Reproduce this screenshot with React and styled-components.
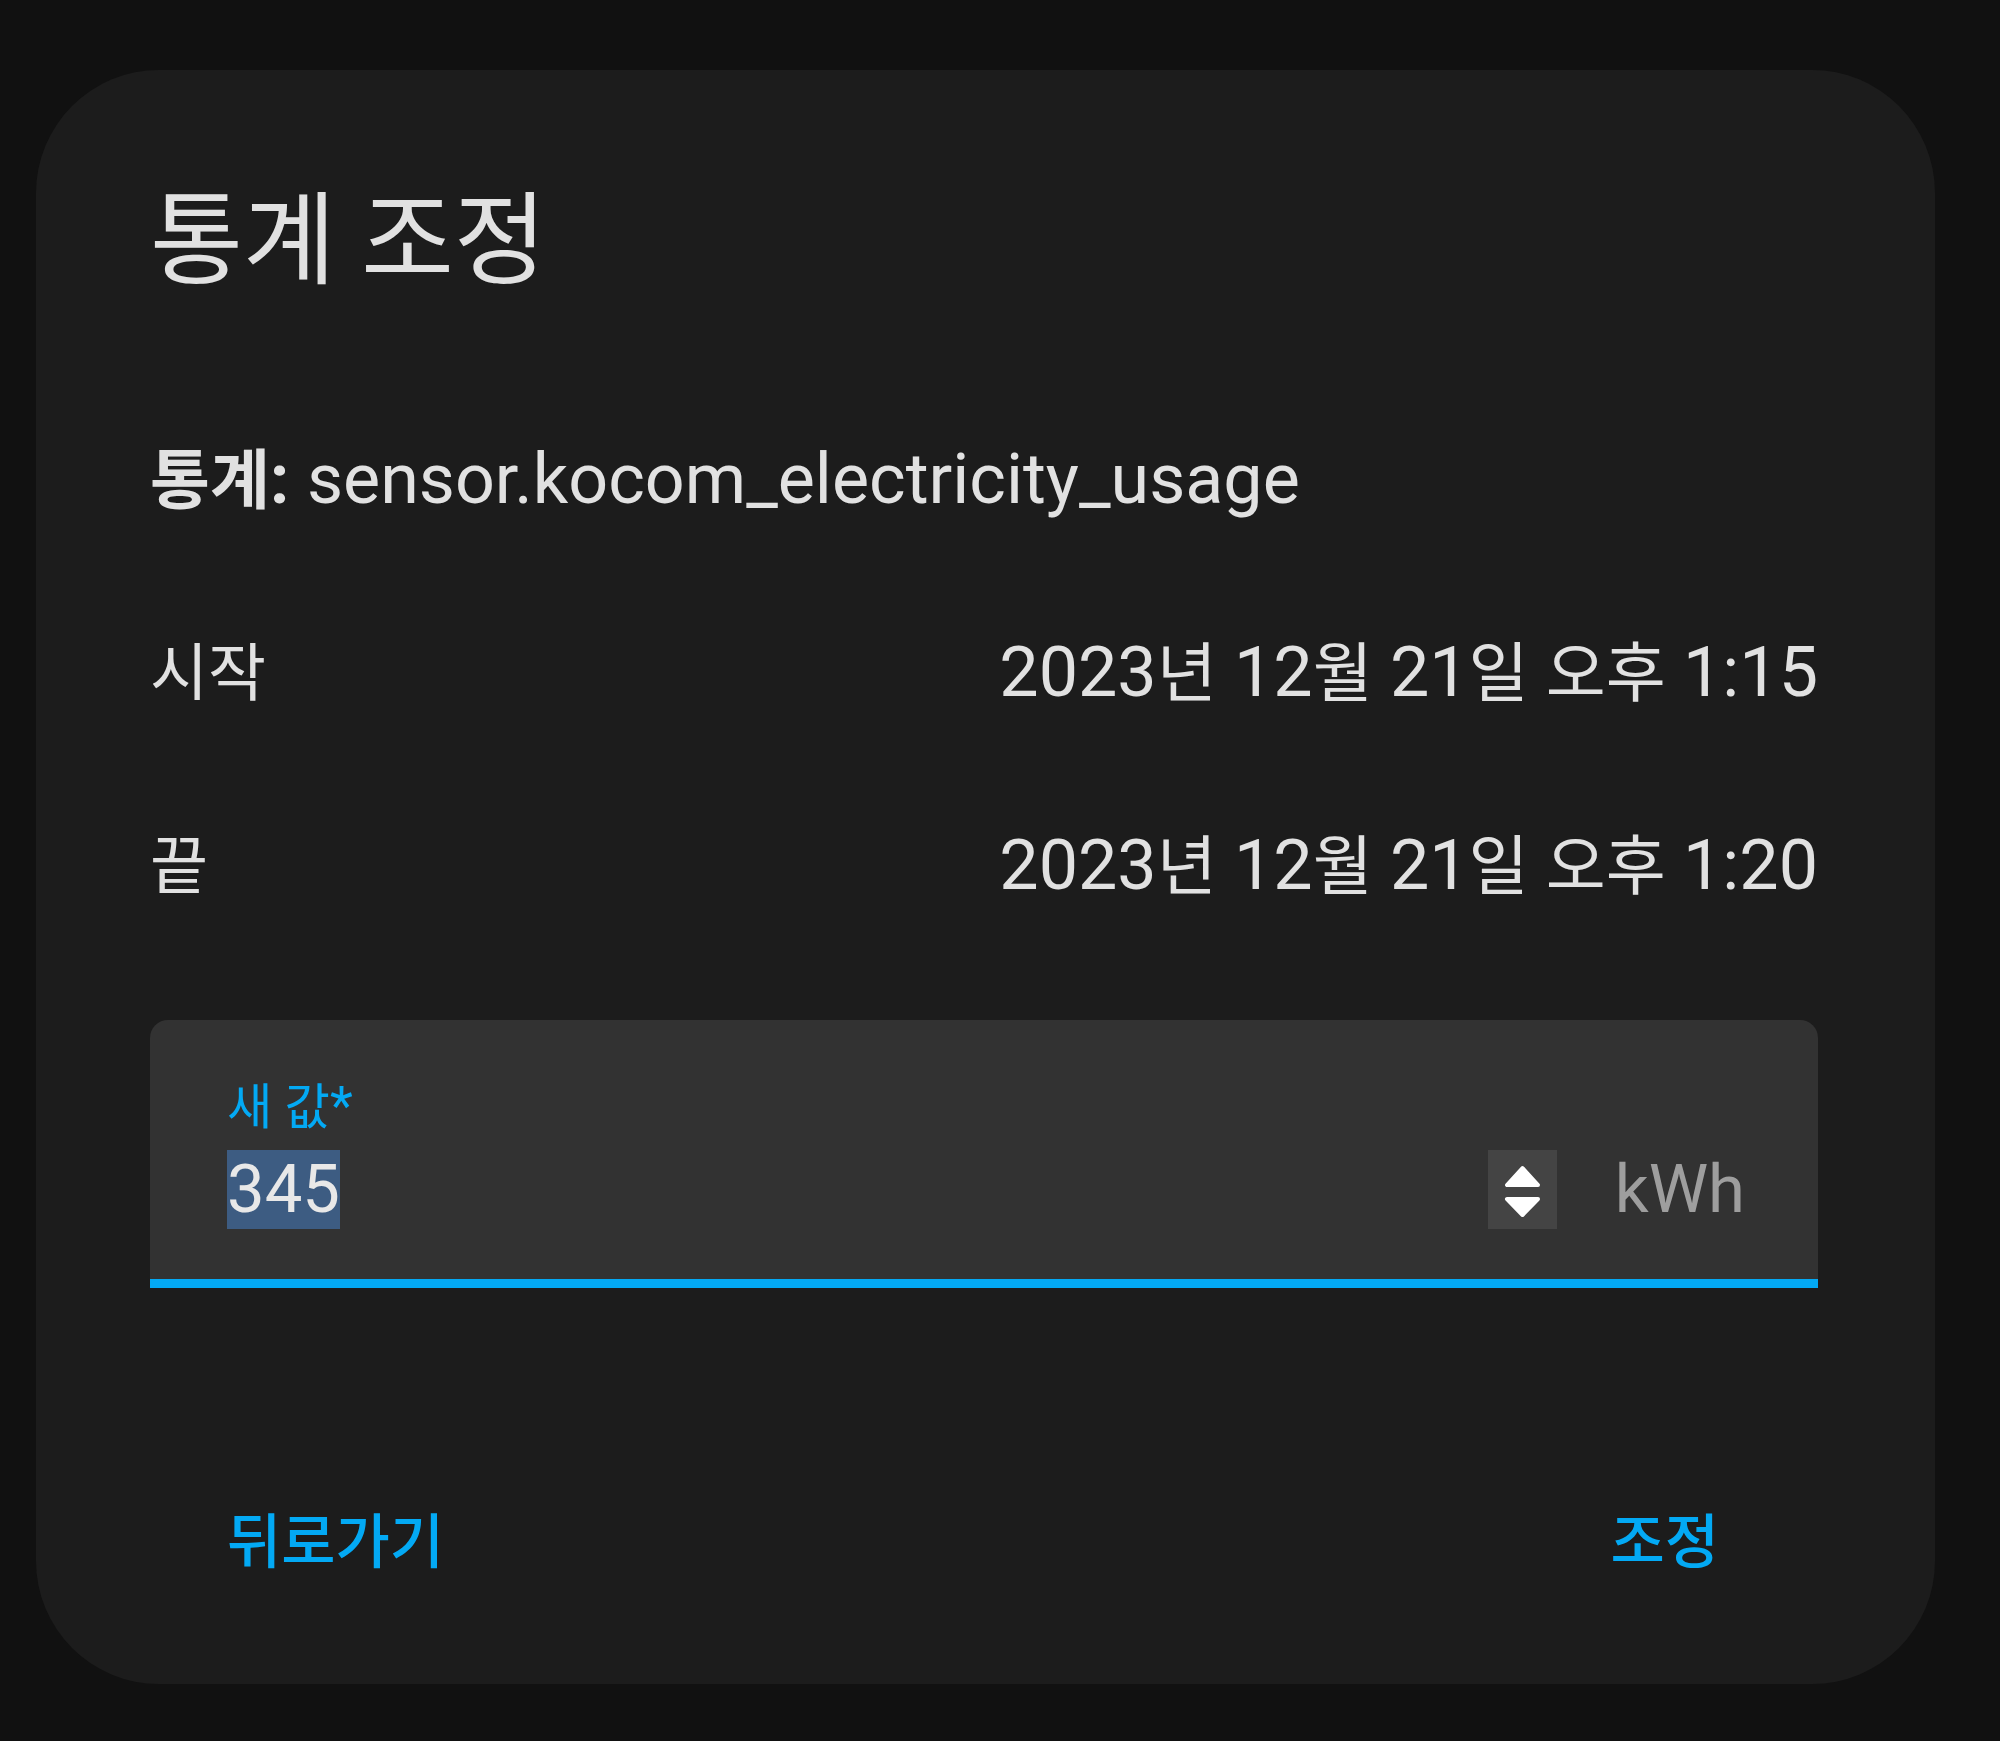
import React from "react";
import styled, { createGlobalStyle } from "styled-components";

const GlobalStyle = createGlobalStyle`
  html, body {
    margin: 0;
    padding: 0;
    background: #111111;
  }
  body {
    font-family: Roboto, "Noto Sans CJK KR", sans-serif;
    color: #e1e1e1;
  }
`;

const Page = styled.div`
  box-sizing: border-box;
  width: 2000px;
  height: 1741px;
  padding: 70px 65px 57px 36px;
  background: #111111;
`;

const Dialog = styled.div`
  box-sizing: border-box;
  width: 1899px;
  height: 1614px;
  background: #1c1c1c;
  border-radius: 123px;
  padding: 108px 117px 67px 114px;
  display: flex;
  flex-direction: column;
`;

const Title = styled.h2`
  margin: 0;
  font-size: 101px;
  line-height: 128px;
  font-weight: 400;
  color: #e1e1e1;
`;

// hangul in the shot is drawn a bit smaller than the latin text
const Ko = styled.span`
  font-size: ${(p) => p.$scale || 0.93}em;
`;

const InfoList = styled.div`
  margin-top: 72px;
  display: flex;
  flex-direction: column;
`;

const InfoRow = styled.div`
  height: 193px;
  display: flex;
  align-items: center;
  justify-content: space-between;
  font-size: 70px;
  color: #e1e1e1;

  b {
    font-weight: 700;
  }
`;

const Field = styled.div`
  box-sizing: border-box;
  margin-top: 63px;
  height: 268px;
  background: #323232;
  border-radius: 18px 18px 0 0;
  border-bottom: 9px solid #03a9f4;
  padding: 56px 73px 0 77px;
`;

const FieldLabel = styled.div`
  font-size: 53px;
  line-height: 60px;
  color: #03a9f4;
`;

const InputRow = styled.div`
  margin-top: 13px;
  height: 79px;
  display: flex;
  align-items: center;
`;

const ValueBox = styled.div`
  flex: 1;
  display: flex;
`;

const Selected = styled.span`
  background: #3d5c82;
  font-size: 67px;
  line-height: 79px;
  color: #e8e8e8;
`;

const Spinner = styled.div`
  width: 69px;
  height: 79px;
  background: #444444;
  margin-right: 58px;
  display: flex;

  svg {
    display: block;
  }
`;

const Suffix = styled.span`
  font-size: 67px;
  line-height: 79px;
  color: #9e9e9e;
`;

const Actions = styled.div`
  margin-top: auto;
  height: 160px;
  display: flex;
  align-items: center;
  justify-content: space-between;
  padding: 0 59px 0 37px;
`;

const TextButton = styled.button`
  height: 160px;
  padding: 0 40px;
  border: none;
  background: none;
  font-family: Roboto, "Noto Sans CJK KR", sans-serif;
  font-size: 59px;
  font-weight: 500;
  color: #03a9f4;
  cursor: pointer;
`;

const SpinIcon = () => (
  <svg width="69" height="79" viewBox="0 0 69 79">
    <polygon
      points="19,35 50,35 34.5,18"
      fill="#fff"
      stroke="#fff"
      strokeWidth="4"
      strokeLinejoin="round"
    />
    <polygon
      points="19,49 50,49 34.5,65"
      fill="#fff"
      stroke="#fff"
      strokeWidth="4"
      strokeLinejoin="round"
    />
  </svg>
);

const rows = [
  { label: "시작", time: "1:15" },
  { label: "끝", time: "1:20" },
];

const DateText = ({ time }) => (
  <span>
    2023<Ko>년</Ko> 12<Ko>월</Ko> 21<Ko>일</Ko> <Ko>오후</Ko> {time}
  </span>
);

const App = () => {
  return (
    <Page>
      <GlobalStyle />
      <Dialog>
        <Title>통계 조정</Title>
        <InfoList>
          <InfoRow>
            <span>
              <b>
                <Ko>통계</Ko>:
              </b>{" "}
              sensor.kocom_electricity_usage
            </span>
          </InfoRow>
          {rows.map((r) => (
            <InfoRow key={r.label}>
              <Ko $scale={0.9}>{r.label}</Ko>
              <DateText time={r.time} />
            </InfoRow>
          ))}
        </InfoList>
        <Field>
          <FieldLabel>
            <Ko>새 값</Ko>*
          </FieldLabel>
          <InputRow>
            <ValueBox>
              <Selected>345</Selected>
            </ValueBox>
            <Spinner>
              <SpinIcon />
            </Spinner>
            <Suffix>kWh</Suffix>
          </InputRow>
        </Field>
        <Actions>
          <TextButton>뒤로가기</TextButton>
          <TextButton>조정</TextButton>
        </Actions>
      </Dialog>
    </Page>
  );
};

export default App;
